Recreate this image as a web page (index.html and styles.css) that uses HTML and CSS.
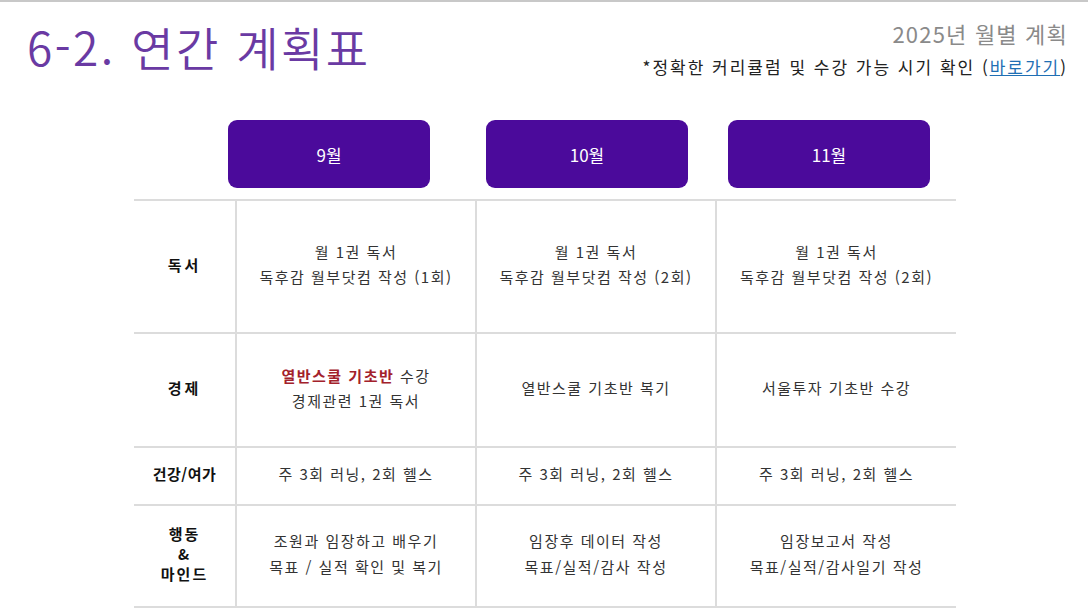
FILE: index.html
```html
<!DOCTYPE html>
<html lang="ko">
<head>
<meta charset="utf-8">
<link rel="stylesheet" href="styles.css">
</head>
<body>
<div class="page">
  <header class="header">
    <h1 class="title">6-2. 연간 계획표</h1>
    <div class="meta">
      <div class="meta-title">2025년 월별 계획</div>
      <div class="meta-note">*정확한 커리큘럼 및 수강 가능 시기 확인 (<a class="link" href="#">바로가기</a>)</div>
    </div>
  </header>

  <div class="months">
    <div class="month m1">9월</div>
    <div class="month m2">10월</div>
    <div class="month m3">11월</div>
  </div>

  <table class="plan">
    <colgroup>
      <col class="c-label"><col class="c-month"><col class="c-month"><col class="c-month3">
    </colgroup>
    <tr class="r1">
      <th class="wide">독서</th>
      <td>월 1권 독서<br>독후감 월부닷컴 작성 (1회)</td>
      <td>월 1권 독서<br>독후감 월부닷컴 작성 (2회)</td>
      <td>월 1권 독서<br>독후감 월부닷컴 작성 (2회)</td>
    </tr>
    <tr class="r2">
      <th class="wide">경제</th>
      <td><strong class="hl">열반스쿨 기초반</strong> 수강<br>경제관련 1권 독서</td>
      <td>열반스쿨 기초반 복기</td>
      <td>서울투자 기초반 수강</td>
    </tr>
    <tr class="r3">
      <th>건강/여가</th>
      <td>주 3회 러닝, 2회 헬스</td>
      <td>주 3회 러닝, 2회 헬스</td>
      <td>주 3회 러닝, 2회 헬스</td>
    </tr>
    <tr class="r4">
      <th class="stack">행동<br>&amp;<br>마인드</th>
      <td>조원과 임장하고 배우기<br>목표 / 실적 확인 및 복기</td>
      <td>임장후 데이터 작성<br>목표/실적/감사 작성</td>
      <td>임장보고서 작성<br>목표/실적/감사일기 작성</td>
    </tr>
  </table>
</div>
</body>
</html>
```

FILE: styles.css
```css
html, body {
  margin: 0;
  padding: 0;
  background: #ffffff;
}

body {
  font-family: "Noto Sans CJK KR", "Noto Sans", sans-serif;
  color: #333;
}

.page {
  width: 1088px;
  height: 612px;
  border-top: 2px solid #c8c8c8;
  box-sizing: border-box;
  overflow: hidden;
}

.header {
  display: flex;
  justify-content: space-between;
  align-items: flex-start;
  padding: 0 20px 0 27px;
  height: 118px;
}

.title {
  margin: 12px 0 0;
  font-size: 46px;
  font-weight: 350;
  color: #6a3aa3;
  letter-spacing: 2.5px;
  line-height: 64px;
}

.meta {
  text-align: right;
  margin-top: 16px;
}

.meta-title {
  font-size: 22px;
  color: #8a8a8a;
  line-height: 30px;
  letter-spacing: 1.2px;
}

.meta-note {
  font-size: 17px;
  color: #222;
  line-height: 24px;
  margin-top: 7px;
  letter-spacing: 2px;
}

.link {
  color: #1f6fb4;
  text-decoration: underline;
}

.months {
  display: flex;
  margin-left: 134px;
  height: 70px;
}

.month {
  width: 202px;
  height: 68px;
  background: #4b0a9b;
  border-radius: 9px;
  color: #fff;
  font-size: 17px;
  display: flex;
  align-items: center;
  justify-content: center;
}

.m1 { margin-left: 94px; }
.m2 { margin-left: 56px; }
.m3 { margin-left: 40px; }

.plan {
  margin: 9px 0 0 134px;
  border-collapse: collapse;
  table-layout: fixed;
  width: 822px;
}

.c-label { width: 102px; }
.c-month { width: 240px; }
.c-month3 { width: 240px; }

.plan th,
.plan td {
  border-top: 2px solid #dcdcdc;
  border-bottom: 2px solid #dcdcdc;
  text-align: center;
  vertical-align: middle;
  padding: 0 0 5px;
}

.plan td {
  border-left: 2px solid #dcdcdc;
  font-size: 15px;
  line-height: 25px;
  color: #333;
  letter-spacing: 1.5px;
  font-weight: 400;
}

.plan th {
  font-size: 15px;
  font-weight: 700;
  color: #111;
  letter-spacing: 0.5px;
}

.plan th.wide {
  letter-spacing: 3px;
}

.plan th.stack {
  line-height: 20px;
  letter-spacing: 2px;
}

.r1 { height: 133px; }
.r2 { height: 114px; }
.r3 { height: 58px; }
.r4 { height: 102px; }

.r4 td {
  line-height: 26px;
}

.hl {
  color: #a3212b;
  font-weight: 700;
}
```
